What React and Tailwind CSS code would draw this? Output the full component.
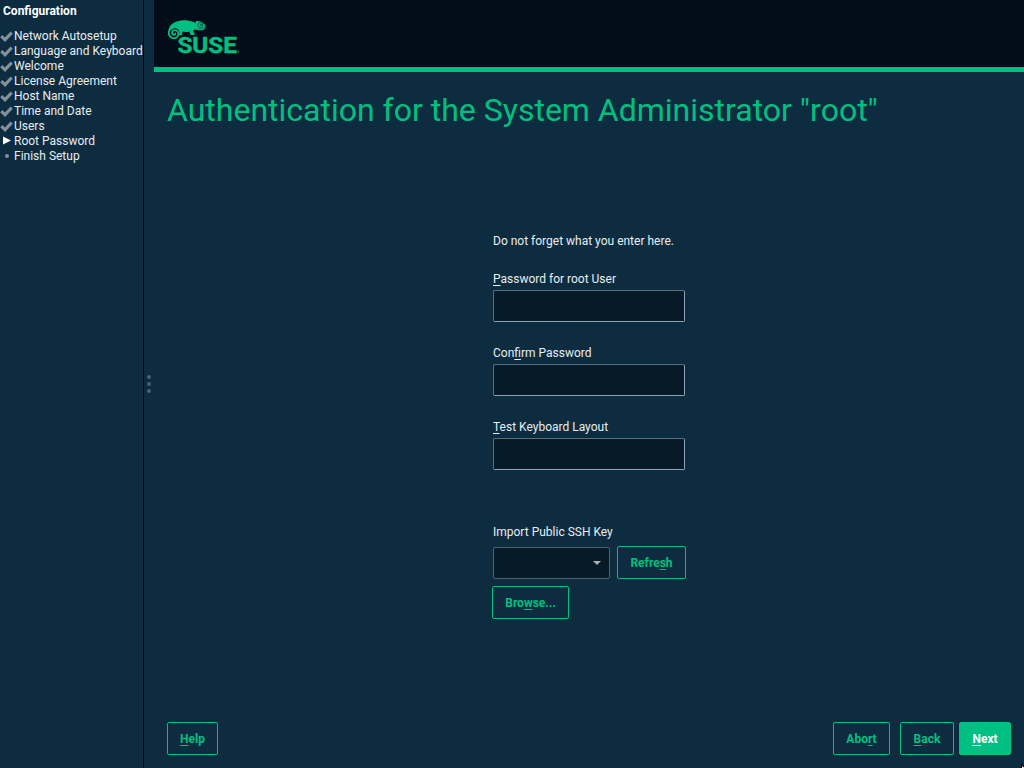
function K({ children }) {
  return <span className="underline decoration-1 underline-offset-[2px] [text-decoration-skip-ink:none]">{children}</span>;
}

function Check() {
  return (
    <svg className="block h-[13px] w-[13px]" viewBox="0 0 13 13">
      <path d="M0.2 7.2 L2.4 5 L4.9 7.4 L10.6 1.6 L12.8 3.7 L5.1 12.1 Z" fill="#84919a" />
    </svg>
  );
}

function Step({ state, children }) {
  return (
    <li className="flex h-[15px] items-center">
      <span className="flex w-[14px] shrink-0 items-center">
        {state === "done" && <Check />}
        {state === "current" && (
          <svg className="-mt-[3px] ml-[3px] block h-[9px] w-[8px]" viewBox="0 0 8 9">
            <path d="M0 0.5 L8 4.5 L0 8.5 Z" fill="#fff" />
          </svg>
        )}
        {state === "todo" && <span className="-mt-[2px] ml-[5px] size-1 rounded-full bg-[#84919a]" />}
      </span>
      <span className="whitespace-nowrap">{children}</span>
    </li>
  );
}

function Logo() {
  return (
    <svg className="block h-[44px] w-[80px] overflow-visible" viewBox="0 0 80 44">
      <path
        d="M1.5 12 C1.5 6 7 2.5 14 1.5 C19 0.8 24 1.5 28.5 4 L29 2 C32.5 1.6 36.5 3 38.3 6.2 C38.8 8.5 37.5 10.8 35 11.3 C31.5 11.4 28.6 11 27 10.6 C25.6 11.4 26 13 27.8 14.6 L27.4 16 L23.8 16 L22.2 12.4 C19.6 13.6 17.4 12.8 15.6 12.6 L14.6 15 L16.4 16 L11.6 16 L11 12 Z"
        fill="#00c081"
      />
      <circle cx="6.8" cy="14" r="5.6" fill="#010d18" />
      <path
        d="M12 9.2 C7.8 6.8 1.8 9.2 1.8 14 C1.8 18.4 6.6 20.6 9.8 18.2 C12.8 15.8 11.2 11.2 7.8 11.2 C4.8 11.2 4 15.2 6.6 15.9 C8.2 16.1 8.8 14.6 7.8 13.8"
        fill="none"
        stroke="#00c081"
        strokeWidth="1.7"
      />
      <circle cx="33.4" cy="6" r="2.5" fill="#00c081" stroke="#0a5a4c" strokeWidth="1" />
      <circle cx="33.8" cy="5.8" r="0.9" fill="#0a4a45" />
      <path d="M30.4 9.2 C33 10.4 35.6 9.8 37.6 8" fill="none" stroke="#0a5a4c" strokeWidth="0.7" />
      <text
        x="10.4"
        y="33.6"
        textLength="59.5"
        lengthAdjust="spacingAndGlyphs"
        fill="#00c081"
        stroke="#00c081"
        strokeWidth="0.4"
        className="font-['Roboto',sans-serif] text-[22.5px] font-bold"
      >
        SUSE
      </text>
      <circle cx="71.3" cy="32.5" r="0.7" fill="#00a873" />
    </svg>
  );
}

function Field({ label }) {
  return (
    <label className="flex h-[74px] flex-col">
      <span className="mb-[3px] h-[15px] leading-[15px]">{label}</span>
      <input className="h-8 w-48 rounded-[2px] border border-[#5a6f7e] border-r-[#8aa3b5] border-b-[#8aa3b5] bg-[#071a28]" />
    </label>
  );
}

function Button({ className, children }) {
  return (
    <button className={`h-[33px] rounded-[2px] border border-[#00c081] pt-[2px] font-bold ${className}`}>{children}</button>
  );
}

export default function App() {
  return (
    <div className="flex h-screen w-screen overflow-hidden bg-[#0d2c40] font-[Roboto,sans-serif] text-[12px] leading-[15px] text-[#e8edf0]">
      <aside className="w-[144px] shrink-0 border-r border-black pt-1">
        <h2 className="pl-[3px] leading-[14px] font-bold text-white">Configuration</h2>
        <ul className="mt-[11px]">
          <Step state="done">Network Autosetup</Step>
          <Step state="done">Language and Keyboard</Step>
          <Step state="done">Welcome</Step>
          <Step state="done">License Agreement</Step>
          <Step state="done">Host Name</Step>
          <Step state="done">Time and Date</Step>
          <Step state="done">Users</Step>
          <Step state="current">Root Password</Step>
          <Step state="todo">Finish Setup</Step>
        </ul>
      </aside>
      <div className="flex w-[10px] shrink-0 flex-col items-center justify-center gap-[3px]">
        <span className="size-1 rounded-full bg-[#4a6271]" />
        <span className="size-1 rounded-full bg-[#4a6271]" />
        <span className="size-1 rounded-full bg-[#4a6271]" />
      </div>
      <main className="flex min-w-0 flex-1 flex-col">
        <header className="h-[72px] shrink-0 border-b-[5px] border-[#00c081] bg-[#010d18] pt-[19px] pl-[13px]">
          <Logo />
        </header>
        <h1 className="mt-[18px] ml-[13px] h-10 text-[32px] leading-10 whitespace-nowrap text-[#00c081]">
          Authentication for the System Administrator "root"
        </h1>
        <section className="mt-[104px] ml-[339px] flex flex-col">
          <p className="mb-[23px]">Do not forget what you enter here.</p>
          <Field label={<><K>P</K>assword for root User</>} />
          <Field label={<>Con<K>f</K>irm Password</>} />
          <Field label={<><K>T</K>est Keyboard Layout</>} />
          <p className="mt-[31px] mb-[6px]">Import Public SSH Key</p>
          <div className="flex gap-[7px]">
            <div className="mt-px flex h-8 w-[117px] items-center justify-end rounded-[2px] border border-[#4d6271] bg-[#071a28] pr-2">
              <svg className="h-1 w-2" viewBox="0 0 8 4"><path d="M0 0 H8 L4 4 Z" fill="#adb0b0" /></svg>
            </div>
            <Button className="w-[69px] text-[#00c081]">Refre<K>s</K>h</Button>
          </div>
          <Button className="mt-[7px] -ml-px w-[77px] text-[#00c081]">Bro<K>w</K>se...</Button>
        </section>
        <footer className="mt-auto mb-[13px] flex pr-[13px] pl-[13px]">
          <Button className="w-[51px] text-[#00c081]"><K>H</K>elp</Button>
          <Button className="ml-auto w-[57px] text-[#00c081]">Abo<K>r</K>t</Button>
          <Button className="ml-[10px] w-[54px] text-[#00c081]"><K>B</K>ack</Button>
          <Button className="ml-[5px] w-[52px] bg-[#00c081] text-white"><K>N</K>ext</Button>
        </footer>
      </main>
      <svg className="absolute right-0 bottom-0 h-[5px] w-[3px]" viewBox="0 0 3 5">
        <path d="M0 0 L3 3 V5 H0 Z" fill="#000" />
        <path d="M1 3 L3 4.5 V5 H1 Z" fill="#fff" />
      </svg>
    </div>
  );
}
